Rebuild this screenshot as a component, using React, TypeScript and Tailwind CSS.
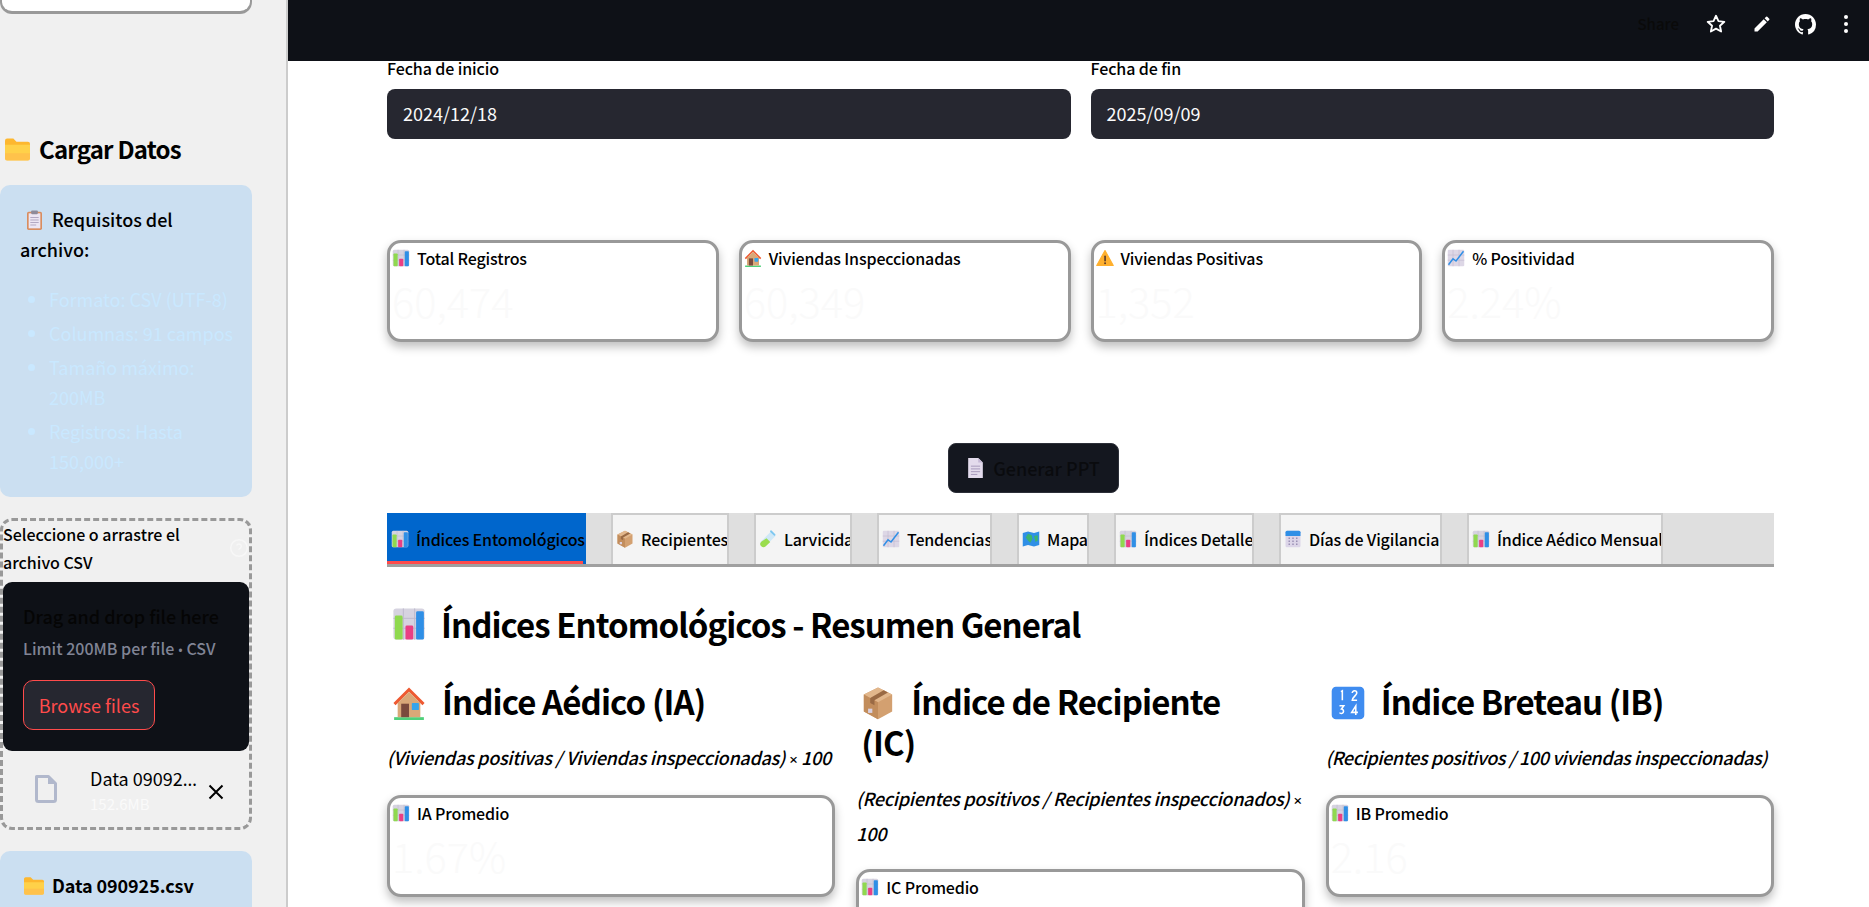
import React from "react";

type P = { c: string };
const Chart = ({ c }: P) => (
  <svg viewBox="0 0 24 24" className={`inline-block align-[-0.15em] shrink-0 ${c}`}>
    <rect x="1" y="1" width="22" height="22" rx="2" fill="#d6d3e0" />
    <path d="M1 8h22M1 15h22M8 1v22M16 1v22" stroke="#bdb9cc" strokeWidth="0.7" />
    <rect x="2" y="6" width="5.5" height="17" rx="1" fill="#8fd94f" />
    <rect x="9.5" y="13" width="5.5" height="10" rx="1" fill="#ea3f84" />
    <rect x="17" y="3" width="5.5" height="20" rx="1" fill="#2f8fe6" />
  </svg>
);
const Folder = ({ c }: P) => (
  <svg viewBox="0 0 24 22" className={`inline-block align-[-0.12em] shrink-0 ${c}`}>
    <path d="M0 3a2 2 0 0 1 2-2h6l3 3h11a2 2 0 0 1 2 2v3H0z" fill="#fdb72f" />
    <path d="M0 7h24v13a2 2 0 0 1-2 2H2a2 2 0 0 1-2-2z" fill="#ffd149" />
    <path d="M0 15h24v5a2 2 0 0 1-2 2H2a2 2 0 0 1-2-2z" fill="#ffb84d" opacity=".6" />
  </svg>
);
const Clip = ({ c }: P) => (
  <svg viewBox="0 0 20 24" className={`inline-block align-[-0.15em] shrink-0 ${c}`}>
    <rect x="1" y="2" width="18" height="22" rx="2" fill="#d98d5f" />
    <rect x="3" y="4" width="14" height="18" fill="#ece5f2" />
    <path d="M5 9h10M5 12h10M5 15h10M5 18h7" stroke="#a69bb8" strokeWidth="1" />
    <rect x="6" y="0.5" width="8" height="4.5" rx="1" fill="#8e8a99" />
  </svg>
);
const House = ({ c }: P) => (
  <svg viewBox="0 0 24 24" className={`inline-block align-[-0.15em] shrink-0 ${c}`}>
    <rect x="1.5" y="22" width="21" height="2" fill="#4fd07a" />
    <path d="M4 11h16v11H4z" fill="#d9a878" />
    <path d="M12 1 1 12l1.5 1.5L12 4l9.5 9.5L23 12z" fill="#ee5a32" />
    <path d="M12 4 4 12h16z" fill="#d9a878" />
    <rect x="6.5" y="12.5" width="5.5" height="9.5" fill="#7a4a3c" />
    <rect x="14" y="12" width="5" height="5" rx=".6" fill="#35a4ec" />
  </svg>
);
const Warn = ({ c }: P) => (
  <svg viewBox="0 0 24 24" className={`inline-block align-[-0.15em] shrink-0 ${c}`}>
    <path d="M12 2 23 22H1z" fill="#ffb02e" stroke="#ffb02e" strokeLinejoin="round" strokeWidth="1.5" />
    <rect x="11" y="8.5" width="2.2" height="8" rx="1" fill="#5b3a2a" />
    <circle cx="12.1" cy="19" r="1.3" fill="#5b3a2a" />
  </svg>
);
const Trend = ({ c }: P) => (
  <svg viewBox="0 0 24 24" className={`inline-block align-[-0.15em] shrink-0 ${c}`}>
    <rect x="1" y="1" width="22" height="22" rx="1.5" fill="#ddd7e6" />
    <path d="M1 8h22M1 15h22M8 1v22M16 1v22" stroke="#bdb5cd" strokeWidth="0.7" />
    <path d="M2 21 8 13l4 3L22 3" stroke="#2f8fe6" strokeWidth="2" fill="none" />
  </svg>
);
const Doc = ({ c }: P) => (
  <svg viewBox="0 0 18 24" className={`inline-block align-[-0.15em] shrink-0 ${c}`}>
    <path d="M1 1h11l5 5v17H1z" fill="#e3dbec" />
    <path d="M12 1l5 5h-5z" fill="#c4b8d4" />
    <path d="M4 10h10M4 13h10M4 16h10M4 19h7" stroke="#a294b8" strokeWidth="1" />
  </svg>
);
const Box = ({ c }: P) => (
  <svg viewBox="0 0 24 24" className={`inline-block align-[-0.15em] shrink-0 ${c}`}>
    <path d="M12 1 22 6v12l-10 5.5L2 18V6z" fill="#d3a070" />
    <path d="M12 1 22 6l-10 5.5L2 6z" fill="#e2b78c" />
    <path d="M2 6l10 5.5v12L2 18z" fill="#c28d5c" />
    <path d="M16 3 6.5 8.5V12l3 1.5V10L19 4.5z" fill="#9a6a44" />
    <rect x="5" y="16" width="3" height="3" fill="#d9d0e0" />
  </svg>
);
const Tube = ({ c }: P) => (
  <svg viewBox="0 0 24 24" className={`inline-block align-[-0.15em] shrink-0 ${c}`}>
    <path d="M16 2 22 8 9 21a4 4 0 0 1-6-6z" fill="#cfe8f7" />
    <path d="M10 11l5 5-6 5.5a4 4 0 0 1-6-6z" fill="#9add4e" />
    <rect x="14" y="3" width="9" height="2.4" rx="1" transform="rotate(45 18.5 4)" fill="#7cc7f0" />
  </svg>
);
const MapI = ({ c }: P) => (
  <svg viewBox="0 0 24 24" className={`inline-block align-[-0.15em] shrink-0 ${c}`}>
    <path d="M1 4l7-2 8 2 7-2v18l-7 2-8-2-7 2z" fill="#2f8fe6" />
    <path d="M8 5l5 2 1 5-3 5-3-3-3-4z" fill="#3cb46e" />
    <path d="M16 8l5-1v7l-3 2z" fill="#3cb46e" />
  </svg>
);
const Cal = ({ c }: P) => (
  <svg viewBox="0 0 22 24" className={`inline-block align-[-0.15em] shrink-0 ${c}`}>
    <rect x="1" y="1" width="20" height="22" rx="2" fill="#dcd5e8" />
    <path d="M1 3a2 2 0 0 1 2-2h16a2 2 0 0 1 2 2v5H1z" fill="#2f8fe6" />
    <path d="M5 11h2M10 11h2M15 11h2M5 15h2M10 15h2M15 15h2M5 19h2M10 19h2M15 19h2" stroke="#9a90b4" strokeWidth="2" />
  </svg>
);
const Nums = ({ c }: P) => (
  <svg viewBox="0 0 24 24" className={`inline-block align-[-0.15em] shrink-0 ${c}`}>
    <rect x="0.5" y="0.5" width="23" height="23" rx="3" fill="#3f8cf0" />
    <path d="M7 4 8 3.4V10M15 5a1.6 1.6 0 0 1 3.2 0c0 1.5-3.2 3-3.2 5h3.4M6 14h3l-1.6 2.2A1.6 1.6 0 1 1 6 18.8M17.5 20.5V14L14.6 18.6H19" stroke="#fff" strokeWidth="1.1" fill="none" />
  </svg>
);

function Metric({ icon, title, value, className = "" }: { icon: React.ReactNode; title: string; value: string; className?: string }) {
  return (
    <div className={`h-[102px] rounded-[14px] border-[3px] border-[#999999] bg-white pl-[2px] pt-[4px] shadow-[0_5px_10px_rgba(0,0,0,0.25)] ${className}`}>
      <div className="flex h-[22px] items-center gap-[7px] text-[16px] font-medium tracking-[-0.15px] text-black">
        {icon}
        <span>{title}</span>
      </div>
      <div className="mt-[7px] text-[41.5px] leading-[48px] font-light text-[#fafafa]">{value}</div>
    </div>
  );
}

const tabs: { icon: (c: string) => React.ReactNode; label: string; w: string }[] = [
  { icon: (c) => <Box c={c} />, label: "Recipientes", w: "w-[118px]" },
  { icon: (c) => <Tube c={c} />, label: "Larvicida", w: "w-[98px]" },
  { icon: (c) => <Trend c={c} />, label: "Tendencias", w: "w-[115px]" },
  { icon: (c) => <MapI c={c} />, label: "Mapa", w: "w-[72px]" },
  { icon: (c) => <Chart c={c} />, label: "Índices Detalle", w: "w-[140px]" },
  { icon: (c) => <Cal c={c} />, label: "Días de Vigilancia", w: "w-[163px]" },
  { icon: (c) => <Chart c={c} />, label: "Índice Aédico Mensual", w: "w-[196px]" },
];

const Para = ({ children, className = "" }: { children: React.ReactNode; className?: string }) => (
  <p className={`mt-[19px] text-[18px] leading-[33px] italic font-medium ${className}`}>{children}</p>
);
const Times = () => <span className="font-['Noto_Sans'] text-[15px]">×</span>;

export default function App() {
  return (
    <div className="flex h-[907px] w-[1869px] overflow-hidden bg-white font-['Noto_Sans_CJK_SC','Source_Sans_Pro',sans-serif] text-black">
      <aside className="h-full w-[288px] shrink-0 overflow-hidden border-r-[2px] border-[#cccccc] bg-[#f0f0f0] pr-[34px]">
        <div className="h-[14px] rounded-b-[12px] border-x-[2px] border-b-[3px] border-[#999999] bg-white" />
        <div className="mt-[120px] flex h-[30px] items-center gap-[9px] pl-[5px] text-[24px] font-bold tracking-[-0.8px]">
          <Folder c="w-[25px] h-[24px]" />
          <span>Cargar Datos</span>
        </div>
        <div className="mt-[21px] h-[312px] rounded-[10px] bg-[#cbdff1] pl-[20px] pr-[14px] pt-[19px]">
          <p className="text-[18px] leading-[30px] font-medium">
            <span className="pl-[6px]"><Clip c="mr-[9px] h-[20px] w-[17px]" /></span>
            Requisitos del archivo:
          </p>
          <ul className="mt-[20px] list-disc pl-[29px] text-[18px] leading-[30px] text-[#c9e8ff] marker:text-[#c9e8ff]">
            <li className="mb-[4px]">Formato: CSV (UTF-8)</li>
            <li className="mb-[4px]">Columnas: 91 campos</li>
            <li className="mb-[4px]">Tamaño máximo: 200MB</li>
            <li>Registros: Hasta 150,000+</li>
          </ul>
        </div>
        <div className="relative mt-[21px] h-[312px] rounded-[12px] border-[3px] border-dashed border-[#999999]">
          <p className="-mt-[1px] pr-[24px] text-[16px] leading-[28px] font-medium">Seleccione o arrastre el archivo CSV</p>
          <svg viewBox="0 0 24 24" fill="none" stroke="#f7f7f7" strokeWidth="1.8" className="absolute right-[0px] top-[17px] h-[20px] w-[20px]">
            <circle cx="12" cy="12" r="10" />
            <path d="M9.2 9a3 3 0 0 1 5.7 1c0 2-3 2.6-3 4.2M12 17.6v.1" />
          </svg>
          <div className="mt-[6px] h-[169px] rounded-[9px] bg-[#0e1117] pl-[20px] pt-[20px]">
            <div className="text-[18px] leading-[28px] font-medium text-[#050505]">Drag and drop file here</div>
            <div className="mt-[7px] text-[16px] leading-[22px] font-medium text-[#808495]">Limit 200MB per file <span className="font-['Noto_Sans'] text-[13px]">•</span> CSV</div>
            <div className="mt-[19px] flex h-[50px] w-[132px] items-center justify-center rounded-[10px] border border-[#ff4b4b] bg-[#262730] text-[18px] text-[#ff4b4b]">Browse files</div>
          </div>
          <div className="flex items-start pl-[31px] pt-[14px]">
            <svg viewBox="0 0 24 30" className="mt-[9px] h-[30px] w-[24px]" fill="none" stroke="#b1b8cc" strokeWidth="3">
              <path d="M2.5 2.5h12l7 7v16a2 2 0 0 1-2 2h-15a2 2 0 0 1-2-2z" strokeLinejoin="round" />
              <path d="M14 2v8h8" fill="#b1b8cc" stroke="none" />
            </svg>
            <div className="ml-[32px] w-[112px]">
              <div className="whitespace-nowrap text-[18px] leading-[26px]">Data 09092<span className="font-['Noto_Sans']">…</span></div>
              <div className="mt-[2px] text-[15px] leading-[20px] text-[#fafafa]">152.6MB</div>
            </div>
            <svg viewBox="0 0 16 16" className="ml-[6px] mt-[19px] h-[16px] w-[16px]" stroke="#000" strokeWidth="2">
              <path d="M1.5 1.5l13 13M14.500 1.5l-13 13" />
            </svg>
          </div>
        </div>
        <div className="mt-[21px] h-[120px] rounded-[10px] bg-[#cbdff1] pl-[24px] pt-[20px]">
          <p className="flex items-center gap-[8px] text-[18px] leading-[28px] font-semibold tracking-[-0.1px]">
            <Folder c="h-[19px] w-[20px]" />
            Data 090925.csv
          </p>
          <p className="pl-[34px] pt-[1px] text-[18px] leading-[28px] font-medium">Filas: 60,474</p>
        </div>
      </aside>

      <main className="min-w-0 flex-1">
        <header className="flex h-[61px] items-center justify-end bg-[#0e1117] pb-[13px] pr-[21px]">
          <span className="text-[15px] font-medium text-[#0a0a0a]">Share</span>
          <svg viewBox="0 0 24 24" className="ml-[26px] h-[22px] w-[22px]" fill="none" stroke="#fff" strokeWidth="2" strokeLinejoin="round">
            <path d="M12 3l2.7 5.9 6.4.7-4.8 4.3 1.3 6.3L12 17.1l-5.6 3.1 1.3-6.3-4.8-4.3 6.4-.7z" />
          </svg>
          <svg viewBox="0 0 24 24" className="ml-[25px] h-[20px] w-[20px]" fill="#fff">
            <path d="M3 17.25V21h3.75L17.81 9.94l-3.75-3.75L3 17.25zM20.71 7.04a1 1 0 0 0 0-1.41l-2.34-2.34a1 1 0 0 0-1.41 0l-1.83 1.83 3.75 3.75 1.83-1.83z" />
          </svg>
          <svg viewBox="0 0 16 16" className="ml-[23px] h-[21px] w-[21px]" fill="#fff">
            <path d="M8 0C3.58 0 0 3.58 0 8c0 3.54 2.29 6.53 5.47 7.59.4.07.55-.17.55-.38 0-.19-.01-.82-.01-1.49-2.01.37-2.53-.49-2.69-.94-.09-.23-.48-.94-.82-1.13-.28-.15-.68-.52-.01-.53.63-.01 1.08.58 1.23.82.72 1.21 1.87.87 2.33.66.07-.52.28-.87.51-1.07-1.78-.2-3.64-.89-3.64-3.95 0-.87.31-1.59.82-2.15-.08-.2-.36-1.02.08-2.12 0 0 .67-.21 2.2.82.64-.18 1.32-.27 2-.27s1.36.09 2 .27c1.53-1.04 2.2-.82 2.2-.82.44 1.1.16 1.92.08 2.12.51.56.82 1.27.82 2.15 0 3.07-1.87 3.75-3.65 3.95.29.25.54.73.54 1.48 0 1.07-.01 1.93-.01 2.2 0 .21.15.46.55.38A8.01 8.01 0 0 0 16 8c0-4.42-3.58-8-8-8z" />
          </svg>
          <svg viewBox="0 0 4 18" className="ml-[28px] h-[18px] w-[4px]" fill="#fff">
            <circle cx="2" cy="2" r="2" /><circle cx="2" cy="9" r="2" /><circle cx="2" cy="16" r="2" />
          </svg>
        </header>

        <div className="pl-[99px] pr-[95px]">
          <div className="grid grid-cols-2 gap-x-[20px]">
            {[["Fecha de inicio", "2024/12/18"], ["Fecha de fin", "2025/09/09"]].map(([l, v]) => (
              <div key={l}>
                <div className="h-[28px] text-[16px] leading-[14px] tracking-[-0.1px] font-medium">{l}</div>
                <div className="flex h-[50px] items-center rounded-[8px] bg-[#262730] pb-[2px] pl-[16px] text-[18px] text-[#fafafa]">{v}</div>
              </div>
            ))}
          </div>

          <div className="mt-[101px] grid grid-cols-4 gap-x-[20px]">
            <Metric icon={<Chart c="h-[18px] w-[18px]" />} title="Total Registros" value="60,474" />
            <Metric icon={<House c="h-[18px] w-[18px]" />} title="Viviendas Inspeccionadas" value="60,349" />
            <Metric icon={<Warn c="h-[18px] w-[18px]" />} title="Viviendas Positivas" value="1,352" />
            <Metric icon={<Trend c="h-[18px] w-[18px]" />} title="% Positividad" value="2.24%" />
          </div>

          <div className="mt-[101px] flex pl-[561px]">
            <div className="flex h-[50px] w-[171px] items-center justify-center gap-[9px] rounded-[8px] border border-[#2c2f38] bg-[#14171f] text-[18px] font-medium text-[#0a0b0e]">
              <Doc c="h-[22px] w-[17px]" />
              Generar PPT
            </div>
          </div>

          <div className="mt-[20px] flex h-[54px] gap-[25px] border-b-[3px] border-[#a0a0a0] bg-[#dfdfdf]">
            <div className="relative flex h-[51px] w-[199px] items-center gap-[7px] bg-[#0066cc] pl-[4px] text-[16px] font-medium tracking-[-0.15px] whitespace-nowrap">
              <Chart c="h-[18px] w-[18px]" />
              Índices Entomológicos
              <div className="absolute bottom-0 left-0 h-[3px] w-[196px] bg-[#ff4b4b]" />
            </div>
            {tabs.map((t) => (
              <div key={t.label} className={`flex h-[51px] items-center gap-[7px] overflow-hidden border-x-[2px] border-t-[2px] border-[#cccccc] bg-[#f4f4f4] pl-[3px] pb-[1px] text-[16px] font-medium tracking-[-0.15px] whitespace-nowrap ${t.w}`}>
                {t.icon("h-[18px] w-[18px]")}
                {t.label}
              </div>
            ))}
          </div>

          <h2 className="mt-[35px] flex h-[44px] items-center gap-[15px] pl-[5px] text-[33px] leading-[44px] font-bold tracking-[-0.95px]">
            <Chart c="h-[34px] w-[34px]" />
            Índices Entomológicos - Resumen General
          </h2>

          <div className="mt-[35px] grid grid-cols-3 gap-x-[21px]">
            <section>
              <h3 className="pl-[5px] pr-[40px] text-[33px] leading-[41px] font-bold tracking-[-0.9px]">
                <House c="mr-[16px] h-[34px] w-[34px]" />
                Índice Aédico (IA)
              </h3>
              <Para className="tracking-[-0.27px]">(Viviendas positivas / Viviendas inspeccionadas) <Times /> 100</Para>
              <Metric className="mt-[19px]" icon={<Chart c="h-[18px] w-[18px]" />} title="IA Promedio" value="1.67%" />
            </section>
            <section>
              <h3 className="pl-[5px] pr-[72px] text-[33px] leading-[41px] font-bold tracking-[-0.9px]">
                <Box c="mr-[16px] h-[34px] w-[34px]" />
                Índice de Recipiente (IC)
              </h3>
              <Para className="tracking-[-0.27px]">(Recipientes positivos / Recipientes inspeccionados) <Times /> 100</Para>
              <Metric className="mt-[19px]" icon={<Chart c="h-[18px] w-[18px]" />} title="IC Promedio" value="2.08%" />
            </section>
            <section>
              <h3 className="pl-[5px] pr-[40px] text-[33px] leading-[41px] font-bold tracking-[-0.9px]">
                <Nums c="mr-[16px] h-[34px] w-[34px]" />
                Índice Breteau (IB)
              </h3>
              <Para className="tracking-[-0.4px] whitespace-nowrap">(Recipientes positivos / 100 viviendas inspeccionadas)</Para>
              <Metric className="mt-[21px]" icon={<Chart c="h-[18px] w-[18px]" />} title="IB Promedio" value="2.16" />
            </section>
          </div>
        </div>
      </main>
    </div>
  );
}
